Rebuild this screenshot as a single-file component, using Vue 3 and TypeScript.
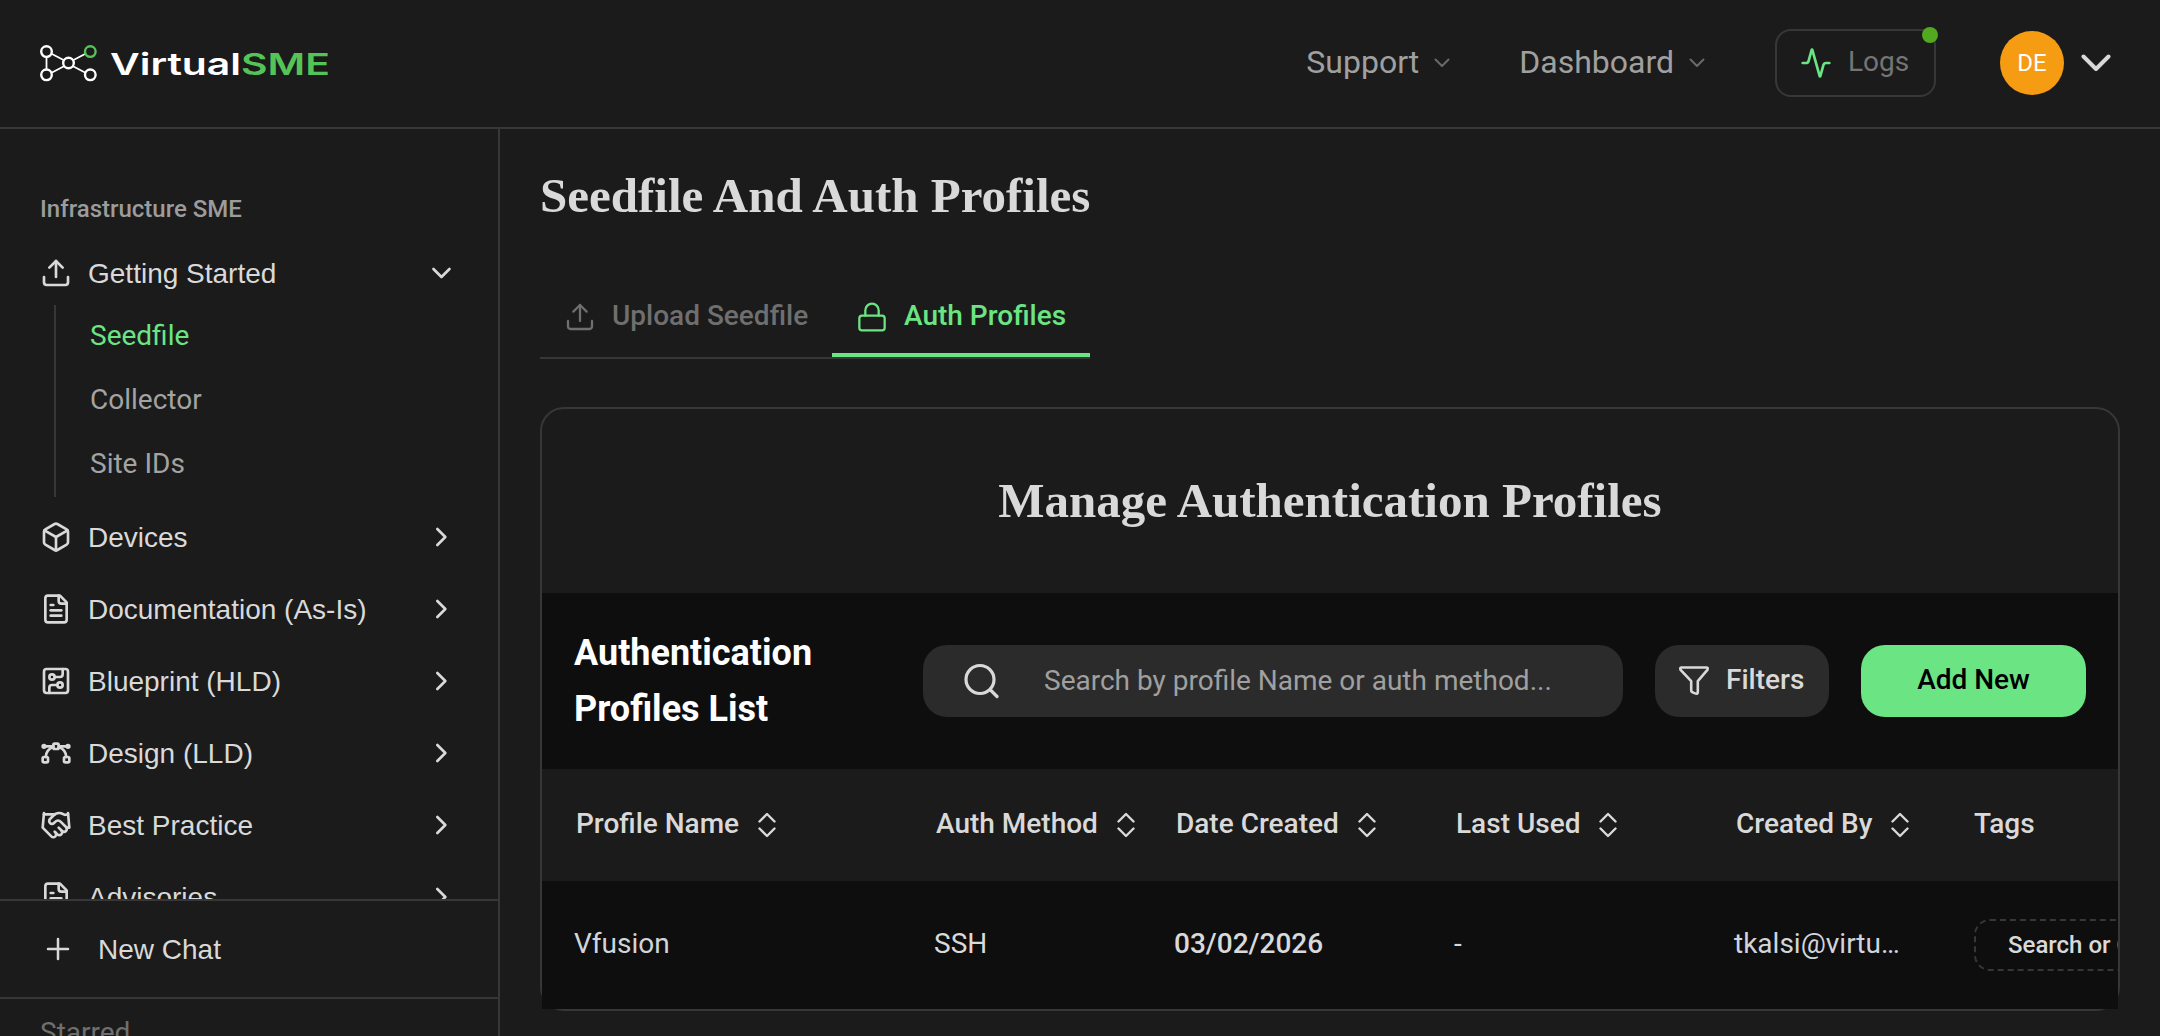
<script setup lang="ts">
interface NavItem {
  label: string
  icon: string
}
interface Column {
  label: string
  sortable: boolean
}

const icons: Record<string, string> = {
  upload: '<path d="M21 15v4a2 2 0 0 1-2 2H5a2 2 0 0 1-2-2v-4"/><path d="m17 8-5-5-5 5"/><path d="M12 3v12"/>',
  box: '<path d="M21 8a2 2 0 0 0-1-1.73l-7-4a2 2 0 0 0-2 0l-7 4A2 2 0 0 0 3 8v8a2 2 0 0 0 1 1.73l7 4a2 2 0 0 0 2 0l7-4A2 2 0 0 0 21 16Z"/><path d="m3.3 7 8.7 5 8.7-5"/><path d="M12 22V12"/>',
  file: '<path d="M15 2H6a2 2 0 0 0-2 2v16a2 2 0 0 0 2 2h12a2 2 0 0 0 2-2V7Z"/><path d="M14 2v4a2 2 0 0 0 2 2h4"/><path d="M10 9H8"/><path d="M16 13H8"/><path d="M16 17H8"/>',
  circuit: '<rect x="3" y="3" width="18" height="18" rx="2"/><path d="M11 9h4a2 2 0 0 0 2-2V3"/><circle cx="9" cy="9" r="2"/><path d="M7 21v-4a2 2 0 0 1 2-2h4"/><circle cx="15" cy="15" r="2"/>',
  bezier: '<rect x="10" y="5" width="4" height="4" rx="1"/><rect x="2" y="15" width="4" height="4" rx="1"/><rect x="18" y="15" width="4" height="4" rx="1"/><path d="M10 7H3M14 7h7"/><circle cx="3" cy="7" r="1"/><circle cx="21" cy="7" r="1"/><path d="M10 7.5A8.5 8.5 0 0 0 4.3 15"/><path d="M14 7.5a8.5 8.5 0 0 1 5.7 7.5"/>',
  handshake: '<path d="m11 17 2 2a1 1 0 1 0 3-3"/><path d="m14 14 2.5 2.5a1 1 0 1 0 3-3l-3.88-3.88a3 3 0 0 0-4.24 0l-.88.88a1 1 0 1 1-3-3l2.81-2.81a5.79 5.79 0 0 1 7.06-.87l.47.28a2 2 0 0 0 1.42.25L21 4"/><path d="m21 3 1 11h-2"/><path d="M3 3 2 14l6.5 6.5a1 1 0 1 0 3-3"/><path d="M3 4h8"/>',
}

const subItems: string[] = ['Seedfile', 'Collector', 'Site IDs']
const navItems: NavItem[] = [
  { label: 'Devices', icon: 'box' },
  { label: 'Documentation (As-Is)', icon: 'file' },
  { label: 'Blueprint (HLD)', icon: 'circuit' },
  { label: 'Design (LLD)', icon: 'bezier' },
  { label: 'Best Practice', icon: 'handshake' },
  { label: 'Advisories', icon: 'file' },
]
const columns: Column[] = [
  { label: 'Profile Name', sortable: true },
  { label: 'Auth Method', sortable: true },
  { label: 'Date Created', sortable: true },
  { label: 'Last Used', sortable: true },
  { label: 'Created By', sortable: true },
  { label: 'Tags', sortable: false },
]
</script>

<template>
  <div class="app">
    <header class="topbar">
      <svg class="logo" width="300" height="44" viewBox="0 0 300 44">
        <g fill="none" stroke="#fff" stroke-width="2.4">
          <path d="M6.5 14v12M12 11l11.5 6M12 29.5l11.5-6M33.5 23.5l11.5 6M33.5 17l11.5-6" stroke-width="1.8" />
          <circle cx="6.5" cy="8.6" r="5.3" />
          <circle cx="6.5" cy="31.8" r="5.3" />
          <circle cx="28.5" cy="20" r="5.3" />
          <circle cx="50.3" cy="31.8" r="5.3" />
          <circle cx="50.3" cy="8.6" r="5.3" stroke="#54c457" />
        </g>
        <text x="70" y="31.7" textLength="131" lengthAdjust="spacingAndGlyphs" fill="#fff">Virtual</text>
        <text x="201" y="31.7" textLength="89" lengthAdjust="spacingAndGlyphs" fill="#54c457">SME</text>
      </svg>
      <nav class="topnav">
        <a class="toplink"><span>Support</span>
          <svg width="16" height="10" viewBox="0 0 16 10"><path d="M1.5 1.5 8 8l6.5-6.5" /></svg>
        </a>
        <a class="toplink dash"><span>Dashboard</span>
          <svg width="16" height="10" viewBox="0 0 16 10"><path d="M1.5 1.5 8 8l6.5-6.5" /></svg>
        </a>
        <button class="logs">
          <svg width="32" height="32" viewBox="0 0 24 24"><path d="M22 12h-2.48a2 2 0 0 0-1.93 1.46l-2.35 8.36a.25.25 0 0 1-.48 0L9.24 2.18a.25.25 0 0 0-.48 0l-2.35 8.36A2 2 0 0 1 4.49 12H2" /></svg>
          <span>Logs</span>
          <i class="dot"></i>
        </button>
        <div class="avatar">DE</div>
        <svg class="usercaret" width="30" height="18" viewBox="0 0 30 18"><path d="M2.5 2.5 15 15 27.5 2.5" /></svg>
      </nav>
    </header>

    <div class="body">
      <aside class="sidebar">
        <div class="navscroll">
          <h3 class="group">Infrastructure SME</h3>
          <div class="navrow first">
            <svg width="32" height="32" viewBox="0 0 24 24" v-html="icons.upload"></svg>
            <span>Getting Started</span>
            <svg width="32" height="32" viewBox="0 0 24 24"><path d="m5.6 9 6 6 6-6" /></svg>
          </div>
          <ul class="sub">
            <li v-for="(s, i) in subItems" :key="s" :class="{ active: i === 0 }">{{ s }}</li>
          </ul>
          <div v-for="n in navItems" :key="n.label" class="navrow">
            <svg width="32" height="32" viewBox="0 0 24 24" v-html="icons[n.icon]"></svg>
            <span>{{ n.label }}</span>
            <svg width="32" height="32" viewBox="0 0 24 24"><path d="m8.5 6 6 6-6 6" /></svg>
          </div>
        </div>
        <div class="newchat">
          <svg width="24" height="24" viewBox="0 0 24 24"><path d="M12 2v20M2 12h20" /></svg>
          <span>New Chat</span>
        </div>
        <div class="starred">Starred</div>
      </aside>

      <main class="main">
        <h1 class="title">Seedfile And Auth Profiles</h1>
        <div class="tabs">
          <div class="tab upload">
            <svg width="32" height="32" viewBox="0 0 24 24" v-html="icons.upload"></svg>
            <span>Upload Seedfile</span>
          </div>
          <div class="tab auth">
            <svg width="32" height="32" viewBox="0 0 24 24"><rect x="2.5" y="11" width="19" height="11" rx="2" /><path d="M7 11V7a5 5 0 0 1 10 0v4" /></svg>
            <span>Auth Profiles</span>
          </div>
        </div>

        <section class="card">
          <h2 class="cardtitle">Manage Authentication Profiles</h2>
          <div class="toolbar">
            <h4>Authentication Profiles List</h4>
            <div class="search">
              <svg width="36" height="36" viewBox="0 0 36 36"><circle cx="17" cy="16.5" r="14" /><path d="m27.5 27 6.5 6.5" /></svg>
              <span>Search by profile Name or auth method...</span>
            </div>
            <button class="filters">
              <svg width="32" height="32" viewBox="0 0 32 32"><path d="M3.6 2.5h24.8q2 0 1 2.4L19.8 16.2V27q0 2-2 1.6l-2.6-1q-2-.6-2-2.4v-9L2.6 4.9q-1-2.4 1-2.4Z" /></svg>
              <span>Filters</span>
            </button>
            <button class="add">Add New</button>
          </div>
          <div class="grid head">
            <div v-for="c in columns" :key="c.label" class="th" :class="{ sortable: c.sortable }">
              <span>{{ c.label }}</span>
              <svg v-if="c.sortable" width="18" height="26" viewBox="0 0 18 26"><path d="m1.5 9.5 7.5-7.5 7.5 7.5M1.5 16.5 9 24l7.5-7.5" /></svg>
            </div>
          </div>
          <div class="grid row">
            <div class="cell cool">Vfusion</div>
            <div class="cell">SSH</div>
            <div class="cell med">03/02/2026</div>
            <div class="cell">-</div>
            <div class="cell cool">tkalsi@virtu…</div>
            <div class="tagcell"><div class="tag">Search or Create</div></div>
          </div>
        </section>
      </main>
    </div>
  </div>
</template>

<style>
html,
body {
  background: #1b1b1b;
  overflow: hidden;
}
</style>

<style scoped>
* {
  box-sizing: border-box;
}
.app {
  width: 2160px;
  height: 1036px;
  display: flex;
  flex-direction: column;
  overflow: hidden;
  background: #1b1b1b;
  color: #d9d9d9;
  font: 400 28px/40px Roboto, sans-serif;
}
svg {
  flex: none;
  fill: none;
  stroke: currentColor;
  stroke-width: 2;
  stroke-linecap: round;
  stroke-linejoin: round;
}
h1, h2, h3, h4, ul {
  margin: 0;
  padding: 0;
}
button {
  font: inherit;
  border: 0;
  padding: 0;
}
.topbar {
  flex: none;
  height: 129px;
  border-bottom: 2px solid #373737;
  display: flex;
  align-items: center;
  justify-content: space-between;
  padding: 0 49px 2px 40px;
}
.logo {
  margin-top: 5px;
}
.logo text {
  font: 600 30px Inter, sans-serif;
  stroke: none;
}
.topnav {
  display: flex;
  align-items: center;
}
.toplink {
  display: flex;
  align-items: center;
  gap: 15px;
  font-size: 32px;
  color: #a0a0a0;
}
.toplink span {
  padding-bottom: 2px;
}
.toplink svg {
  stroke: #6a6a6a;
  margin-top: 1px;
}
.dash {
  margin-left: 69px;
}
.logs {
  position: relative;
  margin-left: 70px;
  width: 161px;
  height: 68px;
  border: 2px solid #373737;
  border-radius: 16px;
  background: none;
  display: flex;
  align-items: center;
  padding-left: 23px;
  gap: 16px;
  color: #757575;
}
.logs span {
  padding-bottom: 2px;
}
.logs svg {
  color: #6be584;
}
.dot {
  position: absolute;
  right: -4px;
  top: -4px;
  width: 16px;
  height: 16px;
  border-radius: 50%;
  background: #52a81e;
}
.avatar {
  margin-left: 64px;
  width: 64px;
  height: 64px;
  border-radius: 50%;
  background: #f59c12;
  color: #fff;
  font-size: 24px;
  display: flex;
  align-items: center;
  justify-content: center;
}
.usercaret {
  margin-left: 17px;
  stroke-width: 4;
}
.body {
  flex: 1;
  display: flex;
  min-height: 0;
}
.sidebar {
  width: 500px;
  flex: none;
  border-right: 2px solid #373737;
  display: flex;
  flex-direction: column;
  font-family: "Liberation Sans", Arial, sans-serif;
}
.navscroll {
  height: 770px;
  flex: none;
  overflow: hidden;
  padding: 60px 40px 0;
}
.group {
  font: 500 24px/40px Roboto, sans-serif;
  color: #9c9c9c;
}
.navrow {
  height: 72px;
  display: flex;
  align-items: center;
}
.navrow.first {
  margin-top: 8px;
}
.navrow span {
  margin-left: 16px;
  padding-top: 2px;
  flex: 1;
}
.sub {
  list-style: none;
  margin: -4px 0 4px 14px;
  border-left: 2px solid #373737;
  padding-left: 34px;
  font-family: Roboto, sans-serif;
  color: #a3a3a3;
}
.sub li {
  height: 64px;
  line-height: 62px;
}
.sub .active {
  color: #6be584;
}
.newchat {
  height: 100px;
  flex: none;
  border-top: 2px solid #373737;
  border-bottom: 2px solid #373737;
  display: flex;
  align-items: center;
  gap: 28px;
  padding-left: 46px;
}
.newchat svg {
  stroke-width: 2.5;
}
.newchat span {
  padding-top: 2px;
}
.starred {
  padding: 14px 40px 0;
  font-family: Roboto, sans-serif;
  color: #6f6f6f;
}
.main {
  flex: 1;
  min-width: 0;
  padding: 37px 40px 0;
}
.title,
.cardtitle {
  font: 700 49px/60px "Liberation Serif", serif;
}
.tabs {
  margin-top: 47px;
  width: 550px;
  height: 86px;
  border-bottom: 2px solid #373737;
  display: flex;
}
.tab {
  display: flex;
  align-items: center;
  font-weight: 500;
  padding-top: 4px;
}
.tab svg {
  stroke-width: 1.7;
}
.tab span {
  margin-bottom: 3px;
}
.upload {
  width: 292px;
  padding-left: 24px;
  gap: 16px;
  color: #6f6f6f;
}
.auth {
  width: 258px;
  padding-left: 24px;
  gap: 16px;
  color: #6be584;
  box-shadow: inset 0 -4px #6be584;
}
.card {
  margin-top: 48px;
  width: 1580px;
  height: 604px;
  border: 2px solid #373737;
  border-radius: 24px;
}
.card .cardtitle {
  height: 184px;
  line-height: 184px;
  text-align: center;
}
.toolbar {
  height: 176px;
  background: #0e0e0e;
  padding: 32px;
  display: flex;
  align-items: center;
  gap: 32px;
}
.toolbar h4 {
  font: 700 36px/56px Roboto, sans-serif;
  color: #fff;
  width: 317px;
}
.search {
  width: 700px;
  height: 72px;
  border-radius: 24px;
  background: #2b2b2b;
  display: flex;
  align-items: center;
  padding-left: 40px;
  gap: 45px;
  color: #a0a0a0;
}
.search svg {
  stroke: #d9d9d9;
  stroke-width: 3.2;
}
.filters {
  width: 174px;
  height: 72px;
  border-radius: 24px;
  background: #2b2b2b;
  color: #d9d9d9;
  font-weight: 500;
  display: flex;
  align-items: center;
  padding-left: 23px;
  gap: 16px;
}
.filters svg {
  stroke-width: 2.6;
}
.filters span {
  padding-bottom: 2px;
}
.add {
  width: 225px;
  height: 72px;
  border-radius: 24px;
  background: #6be584;
  color: #000;
  font-weight: 500;
  padding-bottom: 2px;
}
.grid {
  display: grid;
  grid-template-columns: 360px 240px 280px 280px 240px 144px;
  align-items: center;
  padding-left: 32px;
  overflow: hidden;
}
.head {
  height: 112px;
  font-weight: 500;
}
.th {
  display: flex;
  align-items: center;
  gap: 19px;
}
.th svg {
  stroke-width: 2.4;
}
.th span {
  padding-bottom: 2px;
}
.th.sortable {
  padding-left: 2px;
}
.row {
  height: 128px;
  background: #0e0e0e;
}
.cell {
  padding-bottom: 2px;
}
.cool {
  color: #d1d5db;
}
.med {
  font-weight: 500;
}
.tagcell {
  overflow: hidden;
}
.tag {
  width: 260px;
  height: 52px;
  border: 2px dashed #373737;
  border-radius: 16px;
  padding-left: 32px;
  font: 500 24px/48px Roboto, sans-serif;
}
</style>
